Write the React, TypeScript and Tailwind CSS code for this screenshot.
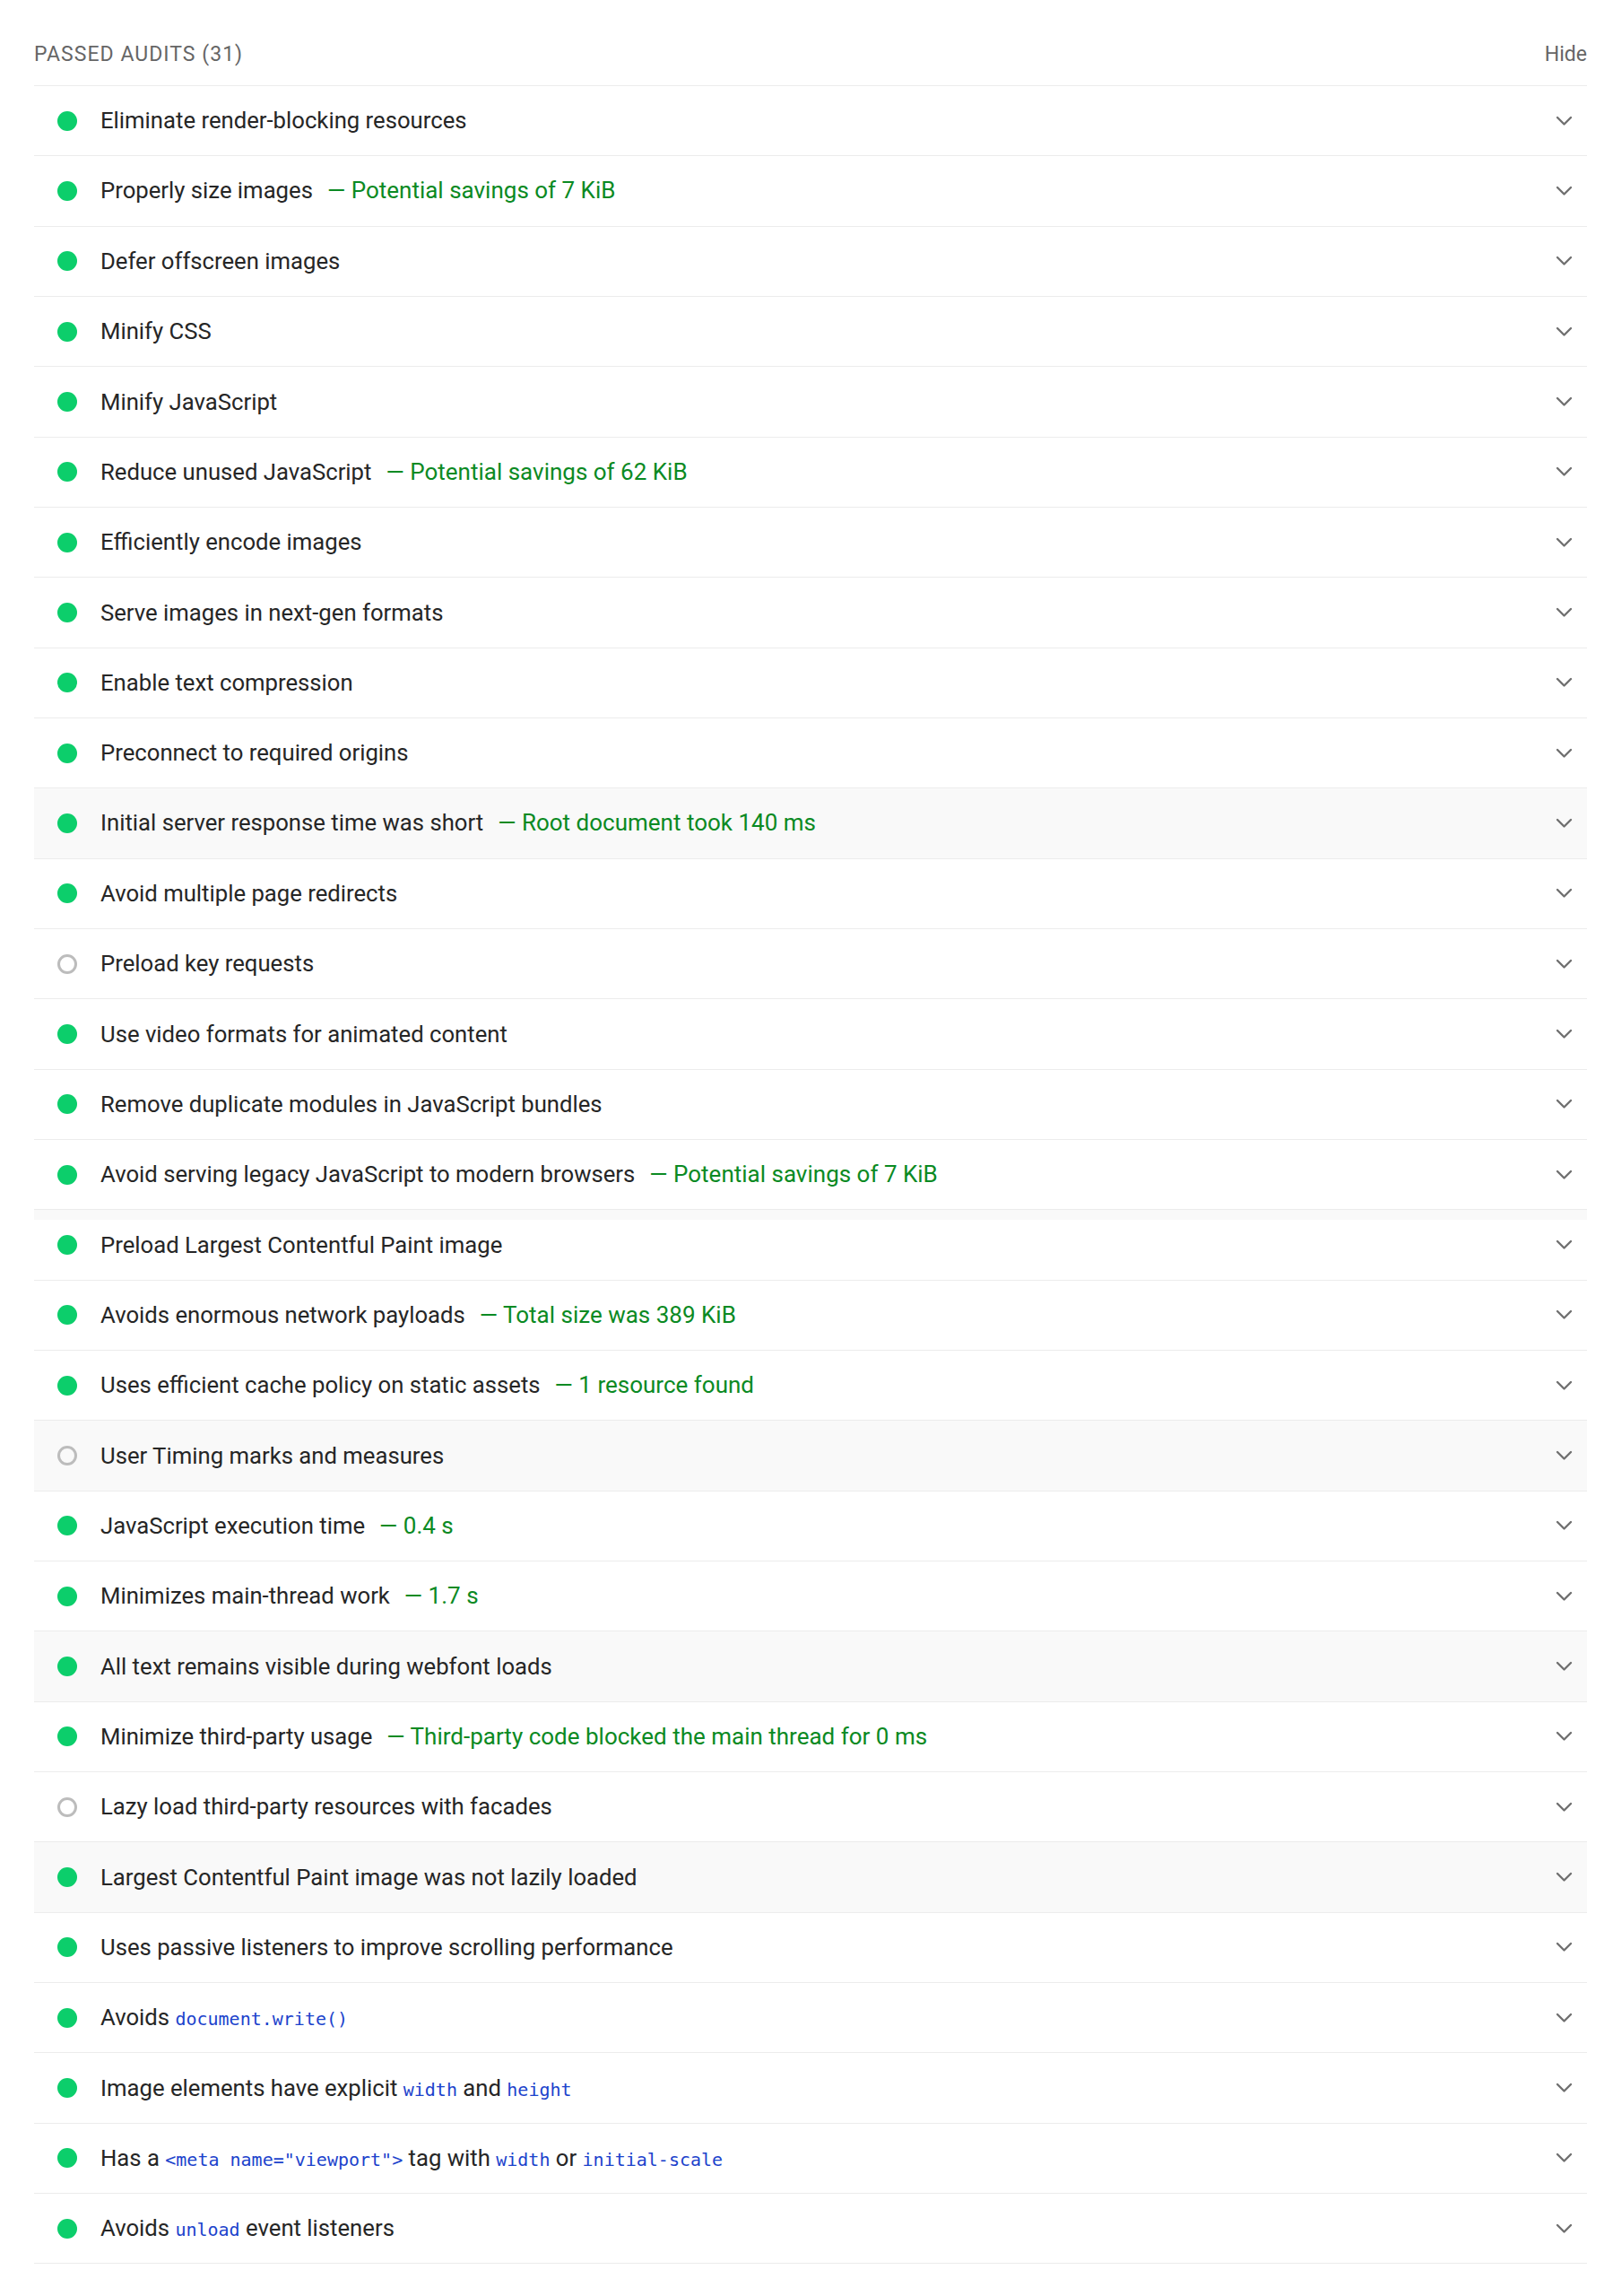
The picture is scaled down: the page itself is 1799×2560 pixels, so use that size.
import type { ReactNode } from 'react';

type Audit = {
  title: ReactNode;
  display?: string;
  icon?: 'pass' | 'na';
  shade?: 'full' | 'strip';
};

const Code = ({ children }: { children: ReactNode }) => (
  <code className="font-['DejaVu_Sans_Mono',monospace] text-[20px] text-[#1c43cc]">{children}</code>
);

const audits: Audit[] = [
  { title: 'Eliminate render-blocking resources' },
  { title: 'Properly size images', display: 'Potential savings of 7 KiB' },
  { title: 'Defer offscreen images' },
  { title: 'Minify CSS' },
  { title: 'Minify JavaScript' },
  { title: 'Reduce unused JavaScript', display: 'Potential savings of 62 KiB' },
  { title: 'Efficiently encode images' },
  { title: 'Serve images in next-gen formats' },
  { title: 'Enable text compression' },
  { title: 'Preconnect to required origins' },
  { title: 'Initial server response time was short', display: 'Root document took 140 ms', shade: 'full' },
  { title: 'Avoid multiple page redirects' },
  { title: 'Preload key requests', icon: 'na' },
  { title: 'Use video formats for animated content' },
  { title: 'Remove duplicate modules in JavaScript bundles' },
  { title: 'Avoid serving legacy JavaScript to modern browsers', display: 'Potential savings of 7 KiB' },
  { title: 'Preload Largest Contentful Paint image', shade: 'strip' },
  { title: 'Avoids enormous network payloads', display: 'Total size was 389 KiB' },
  { title: 'Uses efficient cache policy on static assets', display: '1 resource found' },
  { title: 'User Timing marks and measures', icon: 'na', shade: 'full' },
  { title: 'JavaScript execution time', display: '0.4 s' },
  { title: 'Minimizes main-thread work', display: '1.7 s' },
  { title: 'All text remains visible during webfont loads', shade: 'full' },
  { title: 'Minimize third-party usage', display: 'Third-party code blocked the main thread for 0 ms' },
  { title: 'Lazy load third-party resources with facades', icon: 'na' },
  { title: 'Largest Contentful Paint image was not lazily loaded', shade: 'full' },
  { title: 'Uses passive listeners to improve scrolling performance' },
  { title: <>Avoids <Code>document.write()</Code></> },
  { title: <>Image elements have explicit <Code>width</Code> and <Code>height</Code></> },
  {
    title: (
      <>
        Has a <Code>{'<meta name="viewport">'}</Code> tag with <Code>width</Code> or <Code>initial-scale</Code>
      </>
    ),
  },
  { title: <>Avoids <Code>unload</Code> event listeners</> },
];

function Chevron() {
  return (
    <svg width="19" height="12" viewBox="0 0 19 12" fill="none" className="shrink-0">
      <polyline points="2,2 9.5,9.5 17,2" stroke="#707070" strokeWidth="2.4" strokeLinecap="round" strokeLinejoin="round" />
    </svg>
  );
}

function AuditRow({ audit }: { audit: Audit }) {
  const shade =
    audit.shade === 'full'
      ? 'bg-[#f9f9f9]'
      : audit.shade === 'strip'
        ? 'bg-[linear-gradient(to_bottom,#f9f9f9_11px,transparent_11px)]'
        : 'bg-white';
  return (
    <div className={`flex h-[78.33px] items-center border-b border-[#ececec] pl-[26px] pr-[16px] ${shade}`}>
      {audit.icon === 'na' ? (
        <span className="h-[22px] w-[22px] shrink-0 rounded-full border-[3px] border-[#bcbcbc]" />
      ) : (
        <span className="h-[22px] w-[22px] shrink-0 rounded-full bg-[#0cce6b]" />
      )}
      <div className="ml-[26px] flex flex-1 items-baseline text-[26px] text-[#262626]">
        <span className="text-[25.7px]">{audit.title}</span>
        {audit.display && (
          <span className="ml-[16px] text-[#0b8a23]">— {audit.display}</span>
        )}
      </div>
      <Chevron />
    </div>
  );
}

export default function App() {
  return (
    <div className="min-h-[2560px] bg-white pl-[38px] pr-[29px] font-['Roboto',sans-serif]">
      <div className="flex h-[95px] items-center justify-between pt-[27px] text-[23px] text-[#666666]">
        <span className="tracking-[0.045em]">PASSED AUDITS (31)</span>
        <span>Hide</span>
      </div>
      <div className="border-t border-[#ececec]">
        {audits.map((a, i) => (
          <AuditRow key={i} audit={a} />
        ))}
      </div>
    </div>
  );
}
